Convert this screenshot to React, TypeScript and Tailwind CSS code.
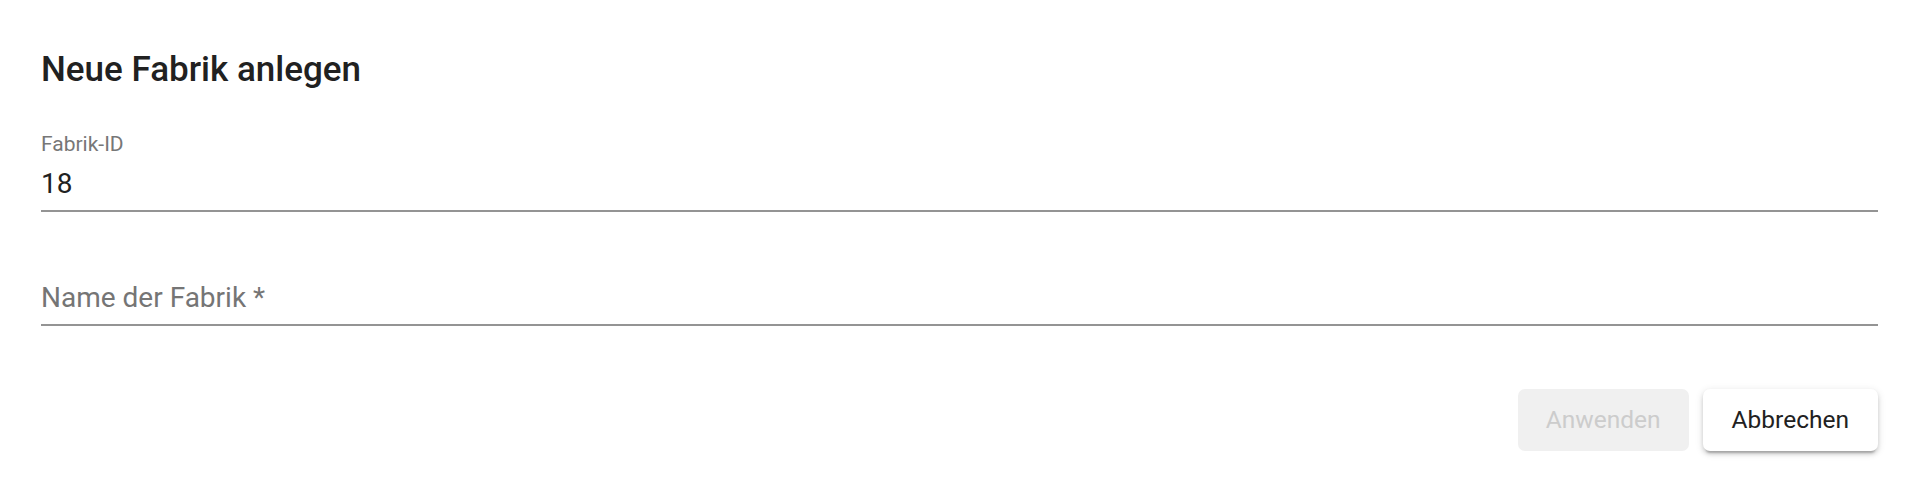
import React from 'react';

interface FieldProps {
  label?: string;
  value?: string;
  placeholder?: string;
}

// Underlined text field; the label row stays reserved even when empty
const Field: React.FC<FieldProps> = ({ label, value, placeholder }) => (
  <div className="flex flex-col">
    <div className="h-[21px] text-[21px] leading-[21px] text-[#777777]">{label}</div>
    <div className="mt-[11px] pb-[9px] border-b-2 border-[#949494]">
      {value ? (
        <div className="h-[35px] text-[28px] leading-[35px] text-[#212121]">{value}</div>
      ) : (
        <div className="h-[35px] text-[28px] leading-[35px] text-[#757575]">{placeholder}</div>
      )}
    </div>
  </div>
);

const App: React.FC = () => {
  return (
    <div
      className="w-[1918px] h-[477px] bg-white overflow-hidden"
      style={{ fontFamily: 'Roboto, "Liberation Sans", sans-serif' }}
    >
      <div className="flex flex-col gap-[36px] pt-[42px] pl-[41px] pr-[40px]">
        <h2 className="text-[35px] leading-[56px] font-medium text-[#212121]">Neue Fabrik anlegen</h2>

        <Field label="Fabrik-ID" value="18" />
        <Field placeholder="Name der Fabrik *" />
      </div>

      <div className="flex justify-end gap-[14px] pr-[40px] mt-[63px]">
        <button
          disabled
          className="h-[62px] px-[28px] rounded-[7px] bg-[#f0f0f0] text-[24.5px] text-[#cccccc] flex items-center"
        >
          Anwenden
        </button>
        <button className="h-[62px] px-[29px] rounded-[7px] bg-white text-[24.5px] text-[#212121] flex items-center shadow-[0_5px_2px_-3px_rgba(0,0,0,0.2),0_3px_4px_0_rgba(0,0,0,0.14),0_2px_9px_0_rgba(0,0,0,0.12)]">
          Abbrechen
        </button>
      </div>
    </div>
  );
};

export default App;
